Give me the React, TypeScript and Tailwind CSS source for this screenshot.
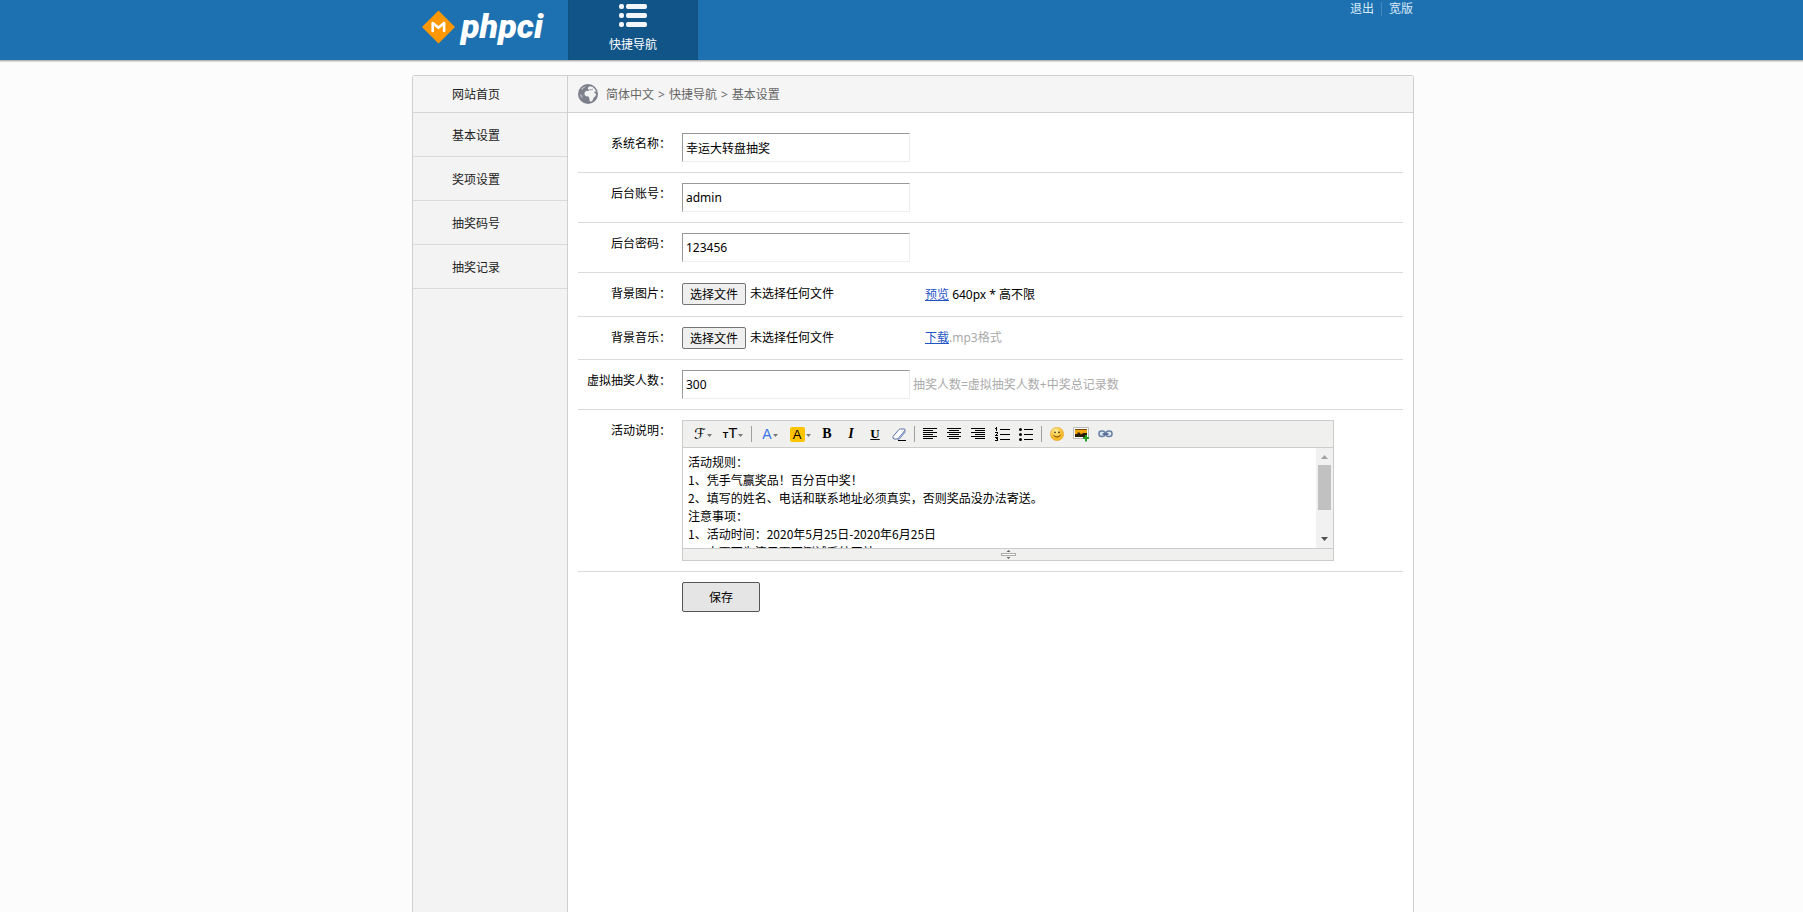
import { useRef, useState, type ReactNode } from "react";

const MENU = ["基本设置", "奖项设置", "抽奖码号", "抽奖记录"];

const RULES = `活动规则：
1、凭手气赢奖品！百分百中奖！
2、填写的姓名、电话和联系地址必须真实，否则奖品没办法寄送。
注意事项：
1、活动时间：2020年5月25日-2020年6月25日
2、本页面为演示页面测试系统网站`;

function Logo() {
  return (
    <a href="#home" aria-label="phpci" className="flex h-[60px] w-[156px] pl-[10px]">
      <svg width="132" height="60" viewBox="0 0 132 60">
        <path d="M16.500 10.500 33 27 16.500 43.500 0 27z" fill="#ff9702" />
        <path d="M10.700 31v-8l5.700 4.800 5.700-4.800v8" fill="none" stroke="#fff" strokeWidth="2.600" strokeLinejoin="round" strokeLinecap="round" />
        <text x="39" y="38" fill="#fff" fontFamily="Roboto" fontSize="34" fontWeight="900" fontStyle="italic">
          phpci
        </text>
      </svg>
    </a>
  );
}

function Header() {
  return (
    <header className="border-b border-[#b5b5b5] bg-[#1e71b1] pl-[23px] shadow-[0_1px_1px_#dcdcdc]">
      <div className="mx-auto flex max-w-[1002px] items-start">
        <Logo />
        <a href="#quick" className="flex h-[60px] w-[130px] flex-col items-center border-x border-[#10507f] bg-[#115488] pt-[4px] text-white">
          <svg width="28" height="24" viewBox="0 0 28 24" fill="#f2f6fa">
            {[0, 9, 18].map((y) => (
              <g key={y}>
                <rect x="0" y={y} width="5" height="5" rx="2" />
                <rect x="7" y={y} width="21" height="5" rx="2" />
              </g>
            ))}
          </svg>
          <span className="mt-[8px] leading-[18px]">快捷导航</span>
        </a>
        <nav className="ml-auto flex items-center pr-px text-[#d9ebf9]">
          <a href="#logout" className="leading-[18px]">退出</a>
          <span className="mx-[7px] h-[14px] w-px bg-[#4488bd]" />
          <a href="#wide" className="leading-[18px]">宽版</a>
        </nav>
      </div>
    </header>
  );
}

function Sidebar() {
  return (
    <nav className="w-[155px] shrink-0 border-r border-[#cfcfcf] bg-[#f3f3f3] text-[#222]">
      <a href="#site" className="flex h-[37px] items-center border-b border-[#d5d5d5] bg-[#f5f5f5] pt-[2px] pl-[39px]">网站首页</a>
      {MENU.map((m) => (
        <a key={m} href={"#" + m} className="flex h-[44px] items-center border-b border-[#dadada] pt-[2px] pl-[39px]">
          {m}
        </a>
      ))}
    </nav>
  );
}

function Globe() {
  return (
    <svg width="20" height="20" viewBox="0 0 20 20">
      <circle cx="10" cy="10" r="10" fill="#7d7f8b" />
      <path d="M3.500 4.500Q5.500 2.500 8 2.200L7.300 3.200 5.500 4 5 5.200 3.500 5.800z" fill="#c9cad0" />
      <path d="M1.500 10l1.800.3 1.700 1.700-.3 1.600-1 .6Q1.700 12.500 1.500 10z" fill="#a9abb4" />
      <path d="M10 3.500l1.500-1.300 3 .5 2.600 2.500 1 2.300-2 .3.800 1.700 1.400.2-.8 2.300-2 2-.8 2.200-1.700 1.600-1.300-.8-.3-2.600-.9-1.900-2.500-.2-1.600-1.800.4-2.400 1.800-1.300 1.900.1.900-.9-1.500-.7z" fill="#f3f3f4" />
      <path d="M11.500 5.500l2 .3 1.500-.8" fill="none" stroke="#7d7f8b" strokeWidth=".8" />
    </svg>
  );
}

function Row({ label, htmlFor, children }: { label: string; htmlFor: string; children: ReactNode }) {
  return (
    <div className="flex border-b border-[#dadada] py-[10px]">
      <label htmlFor={htmlFor} className="w-[93px] shrink-0 text-right leading-[22px]">{label}</label>
      <div className="ml-[11px] flex min-w-0 flex-1 items-start">{children}</div>
    </div>
  );
}

function TextInput({ id, value }: { id: string; value: string }) {
  return (
    <input
      id={id}
      type="text"
      defaultValue={value}
      className="h-[29px] w-[228px] border border-t-[#999] border-r-[#eee] border-b-[#eee] border-l-[#999] bg-white px-[3px] outline-none"
    />
  );
}

function FilePicker({ id }: { id: string }) {
  const ref = useRef<HTMLInputElement>(null);
  const [name, setName] = useState("未选择任何文件");
  return (
    <div className="flex w-[243px] items-center gap-[4px]">
      <input ref={ref} type="file" className="hidden" onChange={(e) => setName(e.target.files?.[0]?.name ?? "未选择任何文件")} />
      <button id={id} type="button" onClick={() => ref.current?.click()} className="h-[22px] w-[64px] rounded-[2px] border border-[#767676] bg-[#efefef] pt-px leading-[18px]">
        选择文件
      </button>
      <span className="leading-[22px]">{name}</span>
    </div>
  );
}

function Caret() {
  return (
    <svg width="5" height="3" viewBox="0 0 5 3" className="mt-[2px]">
      <path d="M0 0h5L2.500 3z" fill="#777" />
    </svg>
  );
}

function Tool({ name, wide, children }: { name: string; wide?: boolean; children: ReactNode }) {
  return (
    <button type="button" aria-label={name} className={"flex h-[20px] items-center justify-center gap-px " + (wide ? "w-[30px]" : "w-[24px]")}>
      {children}
    </button>
  );
}

function Separator() {
  return <span className="mx-[3px] h-[16px] w-px bg-[#a0a0a0]" />;
}

function Lines({ rows }: { rows: [number, number][] }) {
  return (
    <svg width="14" height="12" viewBox="0 0 14 12" shapeRendering="crispEdges">
      {rows.map(([x, w], i) => (
        <rect key={i} x={x} y={i * 2} width={w} height="1" fill="#000" />
      ))}
    </svg>
  );
}

function Toolbar() {
  return (
    <div className="flex h-[27px] items-center border-b border-[#ccc] bg-[#f0f0ee] pl-[5px]">
      <Tool name="字体" wide>
        <span className="font-['DejaVu_Serif','DejaVu_Sans',serif] text-[15px] leading-[16px] text-black">ℱ</span>
        <Caret />
      </Tool>
      <Tool name="文字大小" wide>
        <span className="font-['Liberation_Sans',sans-serif] leading-[16px] text-black">
          <span className="text-[9px] font-bold">T</span>
          <span className="text-[15px]">T</span>
        </span>
        <Caret />
      </Tool>
      <Separator />
      <Tool name="文字颜色" wide>
        <span className="font-['Liberation_Sans',sans-serif] text-[14px] leading-[16px] text-[#3874e8]">A</span>
        <Caret />
      </Tool>
      <Tool name="文字背景" wide>
        <span className="h-[15px] w-[15px] rounded-[2px] bg-[#ffc400] font-['Liberation_Sans',sans-serif] text-[13px] leading-[15px] text-black">A</span>
        <Caret />
      </Tool>
      <Tool name="粗体"><b className="font-['Liberation_Serif',serif] text-[14px] leading-[16px] font-black">B</b></Tool>
      <Tool name="斜体"><b className="font-['Liberation_Serif',serif] text-[14px] leading-[16px] italic">I</b></Tool>
      <Tool name="下划线"><b className="font-['Liberation_Serif',serif] text-[13px] leading-[16px] underline">U</b></Tool>
      <Tool name="删除格式">
        <svg width="15" height="13" viewBox="0 0 15 13">
          <path d="M1 8.500 7 1.500Q7.500 1 8.500 1H12q1.500 0 1 1.500L6.500 10.500Q6 11 5 11H2Q.5 10.500 1 8.500z" fill="#fff" stroke="#5a6ea3" />
          <path d="M5.500 11 13 2.500v2L7 11.500z" fill="#a9c0e8" stroke="#5a6ea3" strokeWidth=".6" />
          <path d="M6 12.500h8" stroke="#000" />
        </svg>
      </Tool>
      <Separator />
      <Tool name="左对齐"><Lines rows={[[0, 14], [0, 10], [0, 14], [0, 10], [0, 14], [0, 10]]} /></Tool>
      <Tool name="居中"><Lines rows={[[0, 14], [2, 10], [0, 14], [2, 10], [0, 14], [2, 10]]} /></Tool>
      <Tool name="右对齐"><Lines rows={[[0, 14], [4, 10], [0, 14], [4, 10], [0, 14], [4, 10]]} /></Tool>
      <Tool name="编号">
        <svg width="15" height="14" viewBox="0 0 15 14" shapeRendering="crispEdges">
          <path d="M5 2h10v1H5zM5 7h10v1H5zM5 12h10v1H5z" />
          <path d="M1 0h1v4H1zM0 1h1v1H0zM0 5h3v1H0zM2 6h1v1H2zM1 7h1v1H1zM0 8h3v1H0zM0 10h3v1H0zM1 11h2v1H1zM2 12h1v1H2zM0 13h3v1H0z" />
        </svg>
      </Tool>
      <Tool name="项目符号">
        <svg width="14" height="13" viewBox="0 0 14 13">
          <path d="M5 1h9v1H5zM5 6h9v1H5zM5 11h9v1H5z" />
          <circle cx="1.500" cy="1.500" r="1.500" />
          <circle cx="1.500" cy="6.500" r="1.500" />
          <circle cx="1.500" cy="11.500" r="1.500" />
        </svg>
      </Tool>
      <Separator />
      <Tool name="表情">
        <svg width="14" height="14" viewBox="0 0 14 14">
          <defs>
            <radialGradient id="smile" cx=".4" cy=".3">
              <stop offset="0" stopColor="#fff3a0" />
              <stop offset="1" stopColor="#f7b82a" />
            </radialGradient>
          </defs>
          <circle cx="7" cy="7" r="6.700" fill="url(#smile)" stroke="#e9a93a" strokeWidth=".6" />
          <circle cx="5" cy="5.300" r=".9" fill="#4b3200" />
          <circle cx="9" cy="5.300" r=".9" fill="#4b3200" />
          <path d="M3.500 8.200q3.500 3.600 7 0" fill="none" stroke="#6b4300" />
        </svg>
      </Tool>
      <Tool name="图片">
        <svg width="16" height="15" viewBox="0 0 16 15">
          <path d="M.5.500h15v11H.5z" fill="#fff" stroke="#bbb" />
          <path d="M2 2h12v8H2z" fill="#f5a50c" />
          <path d="M2 7h2.500V5.500h2L8 7.500 10 6h4v4H2z" fill="#2a1d0a" />
          <path d="M2 2h12v1H2z" fill="#7a4a08" />
          <path d="M10 10h2V8h2v2h2v2h-2v2.500h-2V12h-2z" fill="#23a022" />
        </svg>
      </Tool>
      <Tool name="超级链接">
        <svg width="15" height="8" viewBox="0 0 15 8">
          <rect x="1" y="1" width="6" height="5.500" rx="2.500" fill="#dfe8f3" stroke="#6780a4" strokeWidth="1.500" />
          <rect x="8" y="1" width="6" height="5.500" rx="2.500" fill="#dfe8f3" stroke="#6780a4" strokeWidth="1.500" />
          <path d="M4.500 4h6" stroke="#4e678c" strokeWidth="1.600" />
        </svg>
      </Tool>
    </div>
  );
}

function Editor() {
  return (
    <div className="w-[652px] border border-[#ccc]">
      <Toolbar />
      <div className="flex h-[100px]">
        <textarea
          id="rules"
          defaultValue={RULES}
          className="block h-full min-w-0 flex-1 resize-none overflow-hidden bg-white px-[5px] pt-[5px] font-['Noto_Sans_CJK_SC',sans-serif] leading-[18px] outline-none"
        />
        <div className="flex w-[17px] flex-col items-center bg-[#f1f1f1]">
          <svg width="7" height="17" viewBox="0 0 7 17"><path d="M0 11 3.500 7 7 11z" fill="#a3a3a3" /></svg>
          <span className="h-[45px] w-[13px] bg-[#c1c1c1]" />
          <svg width="7" height="17" viewBox="0 0 7 17" className="mt-auto"><path d="M0 6h7L3.500 10z" fill="#505050" /></svg>
        </div>
      </div>
      <div className="flex h-[12px] items-center justify-center border-t border-[#ccc] bg-[#f0f0ee]">
        <svg width="15" height="9" viewBox="0 0 15 9">
          <path d="M5.500 2 7.500 0l2 2zM5.500 7h4l-2 2z" fill="#666" />
          <rect x=".5" y="3.500" width="14" height="2" fill="#fff" stroke="#aaa" />
        </svg>
      </div>
    </div>
  );
}

export default function App() {
  return (
    <div className="flex min-h-screen flex-col bg-[#fcfcfc] font-['Noto_Sans','Noto_Sans_CJK_SC',sans-serif] text-[12px] leading-[18px] text-black">
      <Header />
      <div className="flex flex-1 pt-[14px] pl-[23px]">
        <div className="mx-auto flex w-full max-w-[1002px] rounded-t-[3px] border border-b-0 border-[#cfcfcf] bg-white">
          <Sidebar />
          <main className="min-w-0 flex-1">
            <div className="flex h-[37px] items-center gap-[8px] border-b border-[#d0d0d0] bg-[#f5f5f5] pl-[10px] text-[#666]">
              <Globe />
              <div className="flex gap-[4px] pt-[2px]">
                <span>简体中文</span>
                <span>&gt;</span>
                <span>快捷导航</span>
                <span>&gt;</span>
                <span>基本设置</span>
              </div>
            </div>
            <form className="px-[10px] pt-[10px]" onSubmit={(e) => e.preventDefault()}>
              <Row label="系统名称：" htmlFor="name"><TextInput id="name" value="幸运大转盘抽奖" /></Row>
              <Row label="后台账号：" htmlFor="account"><TextInput id="account" value="admin" /></Row>
              <Row label="后台密码：" htmlFor="password"><TextInput id="password" value="123456" /></Row>
              <Row label="背景图片：" htmlFor="bg-image">
                <FilePicker id="bg-image" />
                <span className="leading-[23px]"><a href="#preview" className="text-[#1f55c4] underline">预览</a> 640px * 高不限</span>
              </Row>
              <Row label="背景音乐：" htmlFor="bg-music">
                <FilePicker id="bg-music" />
                <span className="leading-[22px] text-[#aaa]"><a href="#download" className="text-[#1f55c4] underline">下载</a>.mp3格式</span>
              </Row>
              <Row label="虚拟抽奖人数：" htmlFor="virtual">
                <TextInput id="virtual" value="300" />
                <span className="ml-[3px] leading-[29px] text-[#aaa]">抽奖人数=虚拟抽奖人数+中奖总记录数</span>
              </Row>
              <Row label="活动说明：" htmlFor="rules"><Editor /></Row>
              <div className="py-[10px] pl-[104px]">
                <button type="submit" className="h-[30px] w-[78px] rounded-[2px] border border-[#555] bg-[#e5e5e5] pt-px">保存</button>
              </div>
            </form>
          </main>
        </div>
      </div>
    </div>
  );
}
